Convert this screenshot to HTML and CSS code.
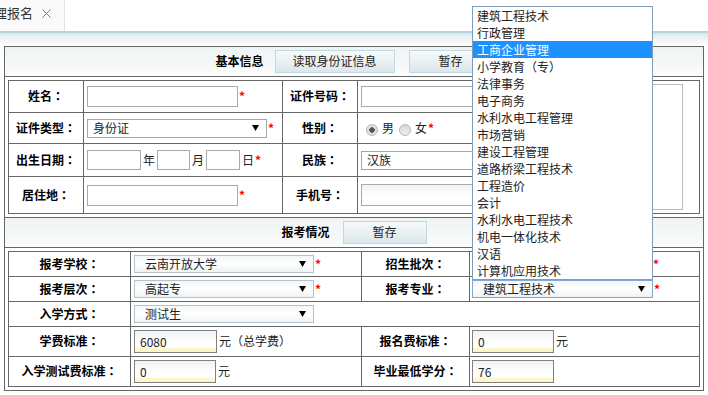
FILE: index.html
```html
<!DOCTYPE html>
<html lang="zh-CN">
<head>
    <meta charset="UTF-8">
    <title>管理报名</title>
    <link rel="stylesheet" href="styles.css">
</head>
<body>
    <div class="tabbar">
        <div class="tab">
            <span class="tab-title">管理报名</span>
            <svg class="tab-close" width="9" height="9" viewBox="0 0 9 9"><path d="M0.5 0.5 L8.5 8.5 M8.5 0.5 L0.5 8.5" stroke="#7a7a7a" stroke-width="1"/></svg>
        </div>
    </div>
    <div class="tabline"></div>

    <div class="main">
        <div class="panel">
            <div class="panel-head">
                <span class="panel-title">基本信息</span>
                <button class="btn btn-wide">读取身份证信息</button>
                <button class="btn btn-next">暂存</button>
            </div>
            <div class="panel-body">
                <div class="grid grid-basic">
                    <div class="photo-cell"><div class="photo"></div></div>

                    <div class="lbl">姓名<span class="colon">：</span></div>
                    <div class="val"><input class="txt w151" type="text"><span class="req">*</span></div>
                    <div class="lbl">证件号码<span class="colon">：</span></div>
                    <div class="val"><input class="txt w180" type="text"></div>

                    <div class="lbl">证件类型<span class="colon">：</span></div>
                    <div class="val">
                        <div class="sel sel-plain w85"><span>身份证</span><svg class="arr" width="7" height="6" viewBox="0 0 7 6"><path d="M0 0 H7 L3.5 6 Z" fill="#000"/></svg></div>
                        <span class="req">*</span>
                    </div>
                    <div class="lbl">性别<span class="colon">：</span></div>
                    <div class="val radios">
                        <span class="radio on"></span><span class="rtext">男</span>
                        <span class="radio"></span><span class="rtext">女</span><span class="req">*</span>
                    </div>

                    <div class="lbl">出生日期<span class="colon">：</span></div>
                    <div class="val date">
                        <input class="txt h20 w54" type="text"><span class="unit">年</span>
                        <input class="txt h20 w33" type="text"><span class="unit">月</span>
                        <input class="txt h20 w34" type="text"><span class="unit unit-end">日</span><span class="req">*</span>
                    </div>
                    <div class="lbl">民族<span class="colon">：</span></div>
                    <div class="val">
                        <div class="sel sel-plain h18 w180"><span>汉族</span></div>
                    </div>

                    <div class="lbl">居住地<span class="colon">：</span></div>
                    <div class="val"><input class="txt w151" type="text"><span class="req">*</span></div>
                    <div class="lbl">手机号<span class="colon">：</span></div>
                    <div class="val"><input class="txt txt-shade h22 w180" type="text"></div>
                </div>
            </div>

            <div class="panel-head">
                <span class="panel-title title-gap">报考情况</span>
                <button class="btn">暂存</button>
            </div>
            <div class="panel-body">
                <div class="grid grid-apply">
                    <div class="lbl">报考学校<span class="colon">：</span></div>
                    <div class="val">
                        <div class="sel"><span>云南开放大学</span><svg class="arr" width="7" height="6" viewBox="0 0 7 6"><path d="M0 0 H7 L3.5 6 Z" fill="#000"/></svg></div>
                        <span class="req">*</span>
                    </div>
                    <div class="lbl">招生批次<span class="colon">：</span></div>
                    <div class="val val-r">
                        <div class="sel"><span></span><svg class="arr" width="7" height="6" viewBox="0 0 7 6"><path d="M0 0 H7 L3.5 6 Z" fill="#000"/></svg></div>
                        <span class="req">*</span>
                    </div>

                    <div class="lbl">报考层次<span class="colon">：</span></div>
                    <div class="val">
                        <div class="sel"><span>高起专</span><svg class="arr" width="7" height="6" viewBox="0 0 7 6"><path d="M0 0 H7 L3.5 6 Z" fill="#000"/></svg></div>
                        <span class="req">*</span>
                    </div>
                    <div class="lbl">报考专业<span class="colon">：</span></div>
                    <div class="val val-r">
                        <div class="sel sel-focus">
                            <span>建筑工程技术</span><svg class="arr" width="7" height="6" viewBox="0 0 7 6"><path d="M0 0 H7 L3.5 6 Z" fill="#000"/></svg>
                            <ul class="dropdown">
                                <li>建筑工程技术</li>
                                <li>行政管理</li>
                                <li class="hover">工商企业管理</li>
                                <li>小学教育（专）</li>
                                <li>法律事务</li>
                                <li>电子商务</li>
                                <li>水利水电工程管理</li>
                                <li>市场营销</li>
                                <li>建设工程管理</li>
                                <li>道路桥梁工程技术</li>
                                <li>工程造价</li>
                                <li>会计</li>
                                <li>水利水电工程技术</li>
                                <li>机电一体化技术</li>
                                <li>汉语</li>
                                <li>计算机应用技术</li>
                            </ul>
                        </div>
                        <span class="req">*</span>
                    </div>

                    <div class="lbl">入学方式<span class="colon">：</span></div>
                    <div class="val span3">
                        <div class="sel"><span>测试生</span><svg class="arr" width="7" height="6" viewBox="0 0 7 6"><path d="M0 0 H7 L3.5 6 Z" fill="#000"/></svg></div>
                    </div>

                    <div class="lbl">学费标准<span class="colon">：</span></div>
                    <div class="val"><input class="num w83" type="text" value="6080"><span class="unit-after">元（总学费）</span></div>
                    <div class="lbl">报名费标准<span class="colon">：</span></div>
                    <div class="val val-r"><input class="num w82" type="text" value="0"><span class="unit-after">元</span></div>

                    <div class="lbl">入学测试费标准<span class="colon">：</span></div>
                    <div class="val"><input class="num w82" type="text" value="0"><span class="unit-after">元</span></div>
                    <div class="lbl">毕业最低学分<span class="colon">：</span></div>
                    <div class="val val-r"><input class="num w82" type="text" value="76"></div>
                </div>
            </div>
        </div>
    </div>
</body>
</html>
```

FILE: styles.css
```css
* {
    margin: 0;
    padding: 0;
    box-sizing: border-box;
}

body {
    font: 12px/1.2 "Noto Sans CJK SC", "Microsoft YaHei", sans-serif;
    color: #222;
    background: #fff;
    overflow: hidden;
}

/* tab strip */
.tabbar {
    height: 31px;
    background: #fff;
    display: flex;
}

.tab {
    width: 65px;
    display: flex;
    align-items: flex-start;
    padding-top: 5px;
    background: #fafafa;
    border-right: 1px solid #e2e2e2;
    overflow: hidden;
    white-space: nowrap;
}

.tab-title {
    font-size: 13px;
    color: #333;
    margin-left: -19px;
    flex-shrink: 0;
}

.tab-close {
    margin: 4px 0 0 9px;
    flex-shrink: 0;
}

.tabline {
    height: 2px;
    background: #b5d4de;
}

.main {
    padding: 13px 4px 0 4px;
    background: linear-gradient(#d6e7ec 0, #e6eff1 3px, #f3f7f7 8px, #fff 13px);
}

/* panel */
.panel {
    width: 700px;
    border: 1px solid #666;
    border-bottom: none;
}

.panel-head {
    height: 30px;
    border-bottom: 1px solid #666;
    background: linear-gradient(#eef3f3, #fbfcfc);
    display: flex;
    align-items: center;
    justify-content: center;
}

.panel-title {
    font-weight: bold;
    color: #000;
    margin-right: 11px;
}

.title-gap {
    margin-right: 13px;
}

.btn {
    height: 23px;
    width: 84px;
    font: inherit;
    color: #222;
    border: 1px solid #c3d9e2;
    background: linear-gradient(#f7fafb, #dbe6eb);
    cursor: pointer;
}

.btn-wide {
    width: 120px;
}

.btn-next {
    margin-left: 14px;
}

.panel-body {
    padding: 3px;
    border-bottom: 1px solid #666;
}

/* grids drawn with 1px gaps */
.grid {
    display: grid;
    gap: 1px;
    padding: 1px;
    background: #666;
}

.grid > div {
    background: #fff;
}

.grid-basic {
    grid-template-columns: 74px 198px 74px 197px 143px;
    grid-template-rows: 31px 30px 32px 36px;
}

.grid-apply {
    grid-template-columns: 121px 230px 107px 229px;
    grid-template-rows: 24px 24px 24px 29px 29px;
}

.lbl {
    display: flex;
    align-items: center;
    justify-content: center;
    font-weight: bold;
    color: #000;
}

/* centred full-width colon, as the original font draws it */
.colon {
    font-family: "Noto Sans CJK JP", "Noto Sans CJK SC", sans-serif;
}

.val {
    display: flex;
    align-items: center;
    padding-left: 3px;
}

.val-r {
    padding-left: 2px;
}

.span3 {
    grid-column: span 3;
}

.photo-cell {
    grid-column: 5;
    grid-row: 1 / 5;
    display: flex;
    justify-content: center;
    padding-top: 3px;
}

.photo {
    width: 110px;
    height: 126px;
    border: 1px solid #bbb;
}

/* fields */
.txt {
    height: 21px;
    border: 1px solid #aaa;
    background: #fff;
    font: inherit;
    padding: 0 4px;
}

.txt-shade {
    background: linear-gradient(#eef3f5, #fff 60%);
}

.h20 { height: 20px; }
.h22 { height: 22px; }
.h18 { height: 18px; }
.w33 { width: 33px; }
.w34 { width: 34px; }
.w54 { width: 54px; }
.w82 { width: 82px; }
.w83 { width: 83px; }
.w85 { width: 85px; }
.w151 { width: 151px; }
.w180 { width: 180px; }

.req {
    color: #f00;
    font-weight: bold;
    margin-left: 1px;
}

.unit {
    margin: 0 2px;
}

.unit-end {
    margin-right: 0;
}

.unit-after {
    margin-left: 2px;
}

.sel {
    position: relative;
    width: 180px;
    height: 18px;
    display: flex;
    align-items: center;
    justify-content: space-between;
    padding: 0 7px 0 10px;
    border: 1px solid #b4c3cc;
    background: linear-gradient(#f3f6f8, #fff 45%, #eff3f5);
    color: #222;
}

.sel-plain {
    height: 19px;
    padding: 0 7px 0 5px;
    border-color: #a5a5a5;
    background: #fff;
}

.sel-focus {
    width: 181px;
    border-color: #7ea9da;
}

.arr {
    flex-shrink: 0;
}

.dropdown {
    position: absolute;
    left: -1px;
    right: -1px;
    bottom: calc(100% + 1px);
    list-style: none;
    background: #fff;
    border: 1px solid #7f9db9;
    z-index: 10;
}

.dropdown li {
    height: 17px;
    line-height: 17px;
    padding-left: 4px;
    color: #222;
    white-space: nowrap;
}

.dropdown li.hover {
    background: #1e90ff;
    color: #fff;
}

.radios .radio {
    width: 12px;
    height: 12px;
    border-radius: 50%;
    border: 1px solid #b5b5b5;
    background: linear-gradient(#d8d8d8, #eee);
    margin-top: 3px;
}

.radios .radio:first-child {
    margin-left: 5px;
}

.radios .radio.on {
    background: radial-gradient(circle, #555 0, #555 2.5px, #e2e2e2 3px);
}

.rtext {
    margin: 0 5px 0 4px;
}

.rtext + .req {
    margin-left: -4px;
}

.num {
    height: 23px;
    border: 1px solid #808080;
    font: inherit;
    color: #222;
    padding: 0 5px;
    background: linear-gradient(#edf2f4, #fff 55%, #fff 78%, #fdf5cc 80%);
}
```
